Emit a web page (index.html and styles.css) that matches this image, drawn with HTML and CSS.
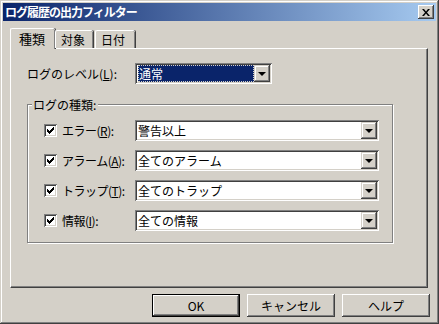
FILE: index.html
```html
<!DOCTYPE html>
<html lang="ja">
<head>
    <meta charset="UTF-8">
    <title>ログ履歴の出力フィルター</title>
    <link rel="stylesheet" href="styles.css">
</head>
<body>

<div class="window">
    <div class="titlebar">
        <span class="title">ログ履歴の出力フィルター</span>
        <button class="close">
            <svg width="8" height="7" viewBox="0 0 8 7">
                <path d="M0 0h2l2 2.5 2-2.5h2l-3 3.5 3 3.5h-2l-2-2.5-2 2.5h-2l3-3.5z" fill="#000"/>
            </svg>
        </button>
    </div>

    <div class="content">
        <div class="tabs">
            <div class="tab active">種類</div>
            <div class="tab">対象</div>
            <div class="tab">日付</div>
        </div>

        <div class="panel">
            <div class="level-row">
                <span class="label">ログのレベル(<u>L</u>):</span>
                <div class="combo level">
                    <div class="field"><span class="selected">通常</span></div>
                    <div class="drop"><span class="arrow"></span></div>
                </div>
            </div>

            <div class="group">
                <span class="legend">ログの種類:</span>

                <div class="row">
                    <label class="check"><span class="box"><svg width="7" height="7" viewBox="0 0 7 7"><path d="M0 2h1v3h-1zM1 3h1v3h-1zM2 4h1v3h-1zM3 3h1v3h-1zM4 2h1v3h-1zM5 1h1v3h-1zM6 0h1v3h-1z" fill="#000"/></svg></span>エラー(<u>R</u>):</label>
                    <div class="combo">
                        <div class="field">警告以上</div>
                        <div class="drop"><span class="arrow"></span></div>
                    </div>
                </div>
                <div class="row">
                    <label class="check"><span class="box"><svg width="7" height="7" viewBox="0 0 7 7"><path d="M0 2h1v3h-1zM1 3h1v3h-1zM2 4h1v3h-1zM3 3h1v3h-1zM4 2h1v3h-1zM5 1h1v3h-1zM6 0h1v3h-1z" fill="#000"/></svg></span>アラーム(<u>A</u>):</label>
                    <div class="combo">
                        <div class="field">全てのアラーム</div>
                        <div class="drop"><span class="arrow"></span></div>
                    </div>
                </div>
                <div class="row">
                    <label class="check"><span class="box"><svg width="7" height="7" viewBox="0 0 7 7"><path d="M0 2h1v3h-1zM1 3h1v3h-1zM2 4h1v3h-1zM3 3h1v3h-1zM4 2h1v3h-1zM5 1h1v3h-1zM6 0h1v3h-1z" fill="#000"/></svg></span>トラップ(<u>T</u>):</label>
                    <div class="combo">
                        <div class="field">全てのトラップ</div>
                        <div class="drop"><span class="arrow"></span></div>
                    </div>
                </div>
                <div class="row">
                    <label class="check"><span class="box"><svg width="7" height="7" viewBox="0 0 7 7"><path d="M0 2h1v3h-1zM1 3h1v3h-1zM2 4h1v3h-1zM3 3h1v3h-1zM4 2h1v3h-1zM5 1h1v3h-1zM6 0h1v3h-1z" fill="#000"/></svg></span>情報(<u>I</u>):</label>
                    <div class="combo">
                        <div class="field">全ての情報</div>
                        <div class="drop"><span class="arrow"></span></div>
                    </div>
                </div>
            </div>
        </div>

        <div class="buttons">
            <button class="btn default">OK</button>
            <button class="btn">キャンセル</button>
            <button class="btn">ヘルプ</button>
        </div>
    </div>
</div>

</body>
</html>
```

FILE: styles.css
```css
* {
    box-sizing: border-box;
}

body {
    margin: 0;
    background-color: #d4d0c8;
    font-family: "Noto Sans CJK JP", "DejaVu Sans", sans-serif;
    font-size: 12px;
    color: #000;
}

u {
    text-decoration: underline;
    text-underline-offset: 1px;
}

.window {
    width: 439px;
    height: 324px;
    padding: 3px;
    background-color: #d4d0c8;
    box-shadow: inset -1px -1px #404040, inset 1px 1px #d4d0c8,
                inset -2px -2px #808080, inset 2px 2px #fff;
    display: flex;
    flex-direction: column;
}

/* title bar */

.titlebar {
    height: 18px;
    display: flex;
    align-items: center;
    justify-content: space-between;
    padding: 0 2px 0 2px;
    background: linear-gradient(to right, #0a246a, #a6caf0);
}

.title {
    color: #fff;
    font-weight: bold;
    font-size: 12px;
    letter-spacing: -1px;
    line-height: 18px;
}

.close {
    width: 16px;
    height: 14px;
    padding: 0;
    border: none;
    background-color: #d4d0c8;
    box-shadow: inset -1px -1px #404040, inset 1px 1px #fff, inset -2px -2px #808080;
    display: flex;
    align-items: center;
    justify-content: center;
}

/* tabs */

.content {
    padding: 7px 6px 0 7px;
    display: flex;
    flex-direction: column;
}

.tabs {
    display: flex;
    align-items: flex-end;
    height: 20px;
    position: relative;
    z-index: 1;
}

.tab {
    height: 18px;
    padding: 0 5px;
    line-height: 17px;
    border-top: 1px solid #fff;
    border-left: 1px solid #fff;
    border-radius: 2px 2px 0 0;
    box-shadow: inset -1px 0 #808080, 1px 0 #404040;
    background-color: #d4d0c8;
}

.tab + .tab {
    margin-left: 2px;
}

.tab.active {
    height: 21px;
    width: 45px;
    margin-bottom: -1px;
    padding: 0 8px;
    line-height: 20px;
    font-size: 13px;
}

.tab.active + .tab {
    margin-left: 0;
    width: 38px;
}

.tab:last-child {
    width: 40px;
}

/* panel */

.panel {
    width: 418px;
    height: 240px;
    border-top: 1px solid #fff;
    border-left: 1px solid #fff;
    box-shadow: inset -1px -1px #808080;
    border-right: 1px solid #404040;
    border-bottom: 1px solid #404040;
    padding: 14px 0 0 16px;
}

.level-row {
    display: flex;
    align-items: center;
}

.label {
    width: 108px;
}

/* combo boxes */

.combo {
    width: 244px;
    height: 21px;
    padding: 2px;
    display: flex;
    background-color: #fff;
    box-shadow: inset 1px 1px #808080, inset -1px -1px #fff,
                inset 2px 2px #404040, inset -2px -2px #d4d0c8;
}

.combo.level {
    width: 137px;
}

.field {
    flex: 1;
    padding-left: 1px;
    line-height: 17px;
    white-space: nowrap;
    overflow: hidden;
}

.selected {
    display: block;
    height: 17px;
    background-color: #0a246a;
    color: #fff;
    padding-left: 1px;
    outline: 1px dotted #d4d0c8;
    outline-offset: -1px;
}

.drop {
    width: 16px;
    height: 17px;
    background-color: #d4d0c8;
    box-shadow: inset -1px -1px #404040, inset 1px 1px #d4d0c8,
                inset -2px -2px #808080, inset 2px 2px #fff;
    display: flex;
    align-items: center;
    justify-content: center;
}

.arrow {
    width: 0;
    height: 0;
    border-left: 4px solid transparent;
    border-right: 4px solid transparent;
    border-top: 4px solid #000;
    margin-top: 1px;
}

/* group box */

.group {
    position: relative;
    width: 366px;
    height: 139px;
    margin-top: 20px;
    border: 1px solid #808080;
    box-shadow: inset 1px 1px #fff, 1px 1px #fff;
    padding: 15px 0 0 16px;
    display: flex;
    flex-direction: column;
    gap: 9px;
}

.legend {
    position: absolute;
    top: -8px;
    left: 4px;
    padding: 0 2px 0 1px;
    line-height: 15px;
    background-color: #d4d0c8;
}

.row {
    display: flex;
    align-items: center;
}

.check {
    width: 91px;
    display: flex;
    align-items: center;
    white-space: nowrap;
    letter-spacing: -0.5px;
}

.box {
    width: 13px;
    height: 13px;
    margin-right: 5px;
    background-color: #fff;
    box-shadow: inset 1px 1px #808080, inset -1px -1px #fff,
                inset 2px 2px #404040, inset -2px -2px #d4d0c8;
    display: flex;
    align-items: center;
    justify-content: center;
}

.box svg {
    shape-rendering: crispEdges;
}

/* bottom buttons */

.buttons {
    display: flex;
    justify-content: flex-end;
    gap: 7px;
    margin-top: 6px;
}

.btn {
    width: 88px;
    height: 23px;
    padding: 0;
    border: none;
    font-family: inherit;
    font-size: 12px;
    background-color: #d4d0c8;
    box-shadow: inset -1px -1px #404040, inset 1px 1px #fff, inset -2px -2px #808080;
}

.btn.default {
    box-shadow: inset 0 0 0 1px #000, inset -2px -2px #404040,
                inset 2px 2px #fff, inset -3px -3px #808080;
}
```
